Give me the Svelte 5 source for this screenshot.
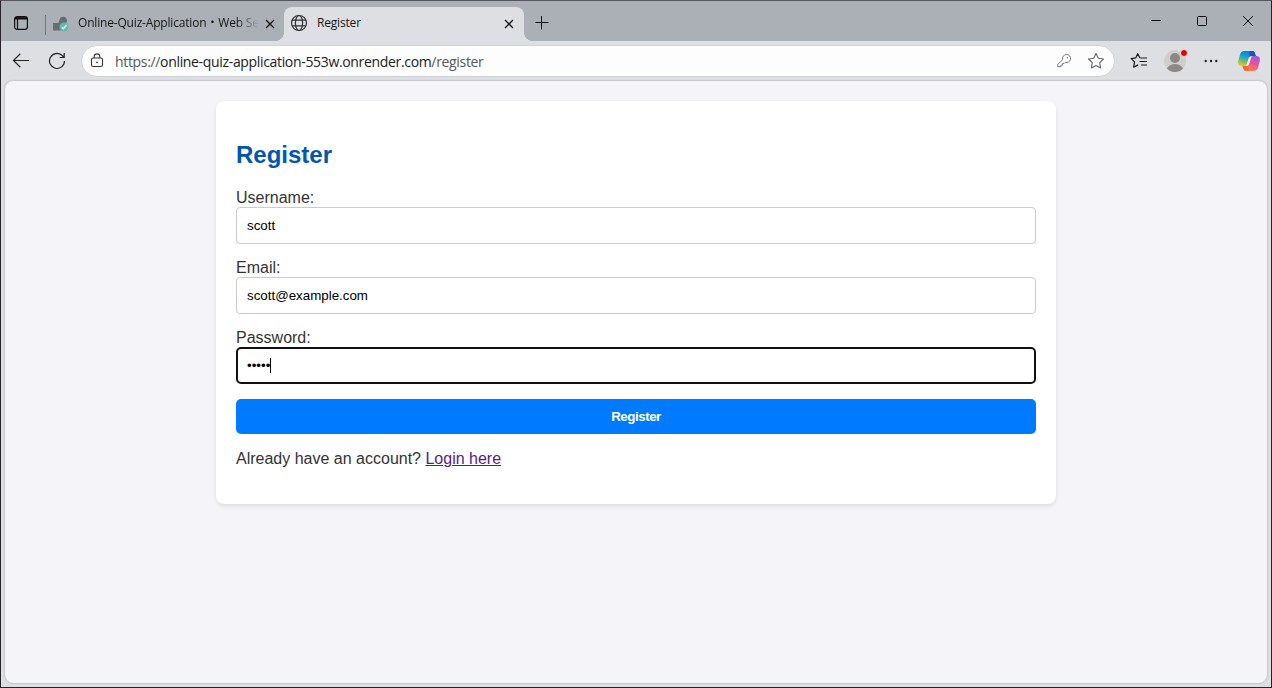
<script lang="ts">
  let username = $state('scott');
  let email = $state('scott@example.com');
</script>

<div class="window">
  <header class="tabs">
    <svg class="workspace" width="16" height="16" viewBox="0 0 16 16" fill="none" stroke="#111" stroke-width="1.2">
      <rect x="1.6" y="1.6" width="12.8" height="12.8" rx="2.4" />
      <path d="M2 3.300h12" stroke-width="2.4" />
      <path d="M4.500 4v10.400" />
    </svg>
    <span class="divider"></span>
    <div class="tab idle">
      <svg width="17" height="17" viewBox="0 0 17 17">
        <path d="M1 7h4.200c1 0 1.600-.5 1.900-1.500l.6-2.200C8.200 1.600 9.500.8 11.200.8c2.200 0 3.800 1.600 3.800 3.700 0 2.300-1.700 4-4 4L8.800 9.500V14.500H1z" fill="#696c70" />
        <circle cx="12" cy="11" r="4.500" fill="#61b9aa" />
        <path d="M9.800 11.200l1.600 1.600 3-3.600" stroke="#fff" stroke-width="1.300" fill="none" />
      </svg>
      <span class="title faded">Online-Quiz-Application・Web Se</span>
      <svg class="close" width="10" height="10" viewBox="0 0 10 10" stroke="#111" stroke-width="1.300"><path d="M1 1l8 8M9 1L1 9" /></svg>
    </div>
    <div class="tab active">
      <svg width="18" height="18" viewBox="0 0 18 18" fill="none" stroke="#303134" stroke-width="1.200">
        <circle cx="9" cy="9" r="7.500" />
        <ellipse cx="9" cy="9" rx="3.600" ry="7.500" />
        <path d="M2.200 6.200h13.600M2.200 11.800h13.600" />
      </svg>
      <span class="title">Register</span>
      <svg class="close" width="10" height="10" viewBox="0 0 10 10" stroke="#111" stroke-width="1.300"><path d="M1 1l8 8M9 1L1 9" /></svg>
    </div>
    <svg class="plus" width="14" height="14" viewBox="0 0 14 14" stroke="#111" stroke-width="1"><path d="M.5 6.500h13M6.500 0v13.500" /></svg>
    <div class="controls">
      <svg width="12" height="12" viewBox="0 0 12 12" stroke="#111"><path d="M1 5.500h10" /></svg>
      <svg width="12" height="12" viewBox="0 0 12 12" fill="none" stroke="#111"><rect x="1.500" y="1.500" width="9" height="9" rx="1" /></svg>
      <svg width="12" height="12" viewBox="0 0 12 12" stroke="#111"><path d="M1 1l10 10M11 1L1 11" /></svg>
    </div>
  </header>

  <nav class="toolbar">
    <svg class="back" width="18" height="16" viewBox="0 0 18 16" fill="none" stroke="#222" stroke-width="1.200"><path d="M17 7.500H1.500M8.300.8L1.500 7.500l6.800 6.700" /></svg>
    <svg class="reload" width="18" height="18" viewBox="0 0 18 18" fill="none" stroke="#222" stroke-width="1.200"><path d="M16.500 9A7.500 7.500 0 1 1 13.900 3.300L16 5.200M16.200 1v4.500h-4.600" /></svg>
    <div class="address">
      <svg width="14" height="16" viewBox="0 0 14 16" fill="none" stroke="#333" stroke-width="1.100">
        <rect x="1.500" y="5" width="11" height="8.500" rx="1.800" />
        <path d="M4.200 5V3.700a2.800 2.800 0 0 1 5.600 0V5" />
        <circle cx="7" cy="9.300" r=".9" fill="#333" stroke="none" />
      </svg>
      <span class="url"><i>https://</i>online-quiz-application-553w.onrender.com<i>/register</i></span>
      <svg class="key" width="16" height="16" viewBox="0 0 16 16" fill="none" stroke="#777" stroke-width="1">
        <path d="M10.500 1.500a4 4 0 1 1-1.200 7.800L8 10.600H6.400v1.600H4.900v1.500H1.700v-2.300L6.700 6.700A4 4 0 0 1 10.500 1.500z" />
        <circle cx="11.300" cy="4.700" r=".8" fill="#777" stroke="none" />
      </svg>
      <svg width="18" height="18" viewBox="0 0 18 18" fill="none" stroke="#666" stroke-width="1.100" stroke-linejoin="round"><path d="M9 1.500l2.300 4.800 5.200.7-3.800 3.700.9 5.200L9 13.400l-4.600 2.500.9-5.200L1.500 7l5.200-.7z" /></svg>
    </div>
    <svg class="favorites" width="18" height="18" viewBox="0 0 18 18" fill="none" stroke="#181818" stroke-width="1.200" stroke-linejoin="round"><path d="M10.700 5.800l-1-.2L7.700 1.700 5.700 5.900l-4.500.7 3.300 3.300-.8 5.200 4.500-2.200M11 6h6M9.500 9.500H17M11 13h6" /></svg>
    <div class="avatar">
      <svg width="22" height="22" viewBox="0 0 22 22">
        <defs><clipPath id="face"><circle cx="11" cy="11" r="11" /></clipPath></defs>
        <g clip-path="url(#face)"><rect width="22" height="22" fill="#d1cfcc" /><circle cx="11" cy="8" r="5" fill="#8b8885" /><ellipse cx="11" cy="20" rx="8.300" ry="6" fill="#8b8885" /></g>
      </svg>
      <b></b>
    </div>
    <svg class="more" width="14" height="4" viewBox="0 0 14 4" fill="#222"><circle cx="1.700" cy="2" r="1.200" /><circle cx="7" cy="2" r="1.200" /><circle cx="12.300" cy="2" r="1.200" /></svg>
    <svg class="assistant" width="22" height="20" viewBox="0 0 22 20">
      <defs>
        <linearGradient id="cool" x1=".6" y1="0" x2=".25" y2="1"><stop stop-color="#087edc" /><stop offset=".4" stop-color="#18a1d6" /><stop offset=".72" stop-color="#79bf59" /><stop offset="1" stop-color="#f4c71c" /></linearGradient>
        <linearGradient id="warm" x1=".8" y1="0" x2=".25" y2="1"><stop stop-color="#a052e8" /><stop offset=".5" stop-color="#ee568c" /><stop offset="1" stop-color="#ff8b42" /></linearGradient>
      </defs>
      <path d="M6 0h8.500c1.700 0 2.200 1.400 2.700 3l.6 2H14c-2 0-2.800 1.100-3.300 2.700L9 13c-.5 1.500-1.300 2-2.600 2H3.500C.7 15-.3 12.500.3 9.700L2 3.500C2.700 1.200 4 0 6 0z" fill="url(#cool)" />
      <path d="M16 20H8.500c-2 0-2.700-1.300-3.300-3l-.7-2H7c2 0 2.800-1 3.300-2.500L12 7.300C12.500 5.600 13.300 5 14.700 5h4c2.700 0 3.700 2.400 3 5.300L20 16.500c-.6 2.300-2 3.500-4 3.500z" fill="url(#warm)" />
      <path d="M11.500 0h3c1.700 0 2.200 1.400 2.700 3l.6 2H14c-1.400 0-2.100.5-2.600 1.300z" fill="#1555bd" />
      <path d="M4.500 15H7c1.400 0 2.200-.5 2.700-1.300L11 20H8.500c-2 0-2.700-1.300-3.300-3z" fill="#f16b34" />
      <path d="M10.300 8.500C10.900 6.200 11.900 5.200 13.800 5.200h.8c-1 .5-1.500 1.400-1.800 2.500l-1.400 4.500c-.7 2.100-1.700 2.800-3.700 2.800h-.5c1-.4 1.500-1.200 1.800-2.200z" fill="#eeeef2" />
    </svg>
  </nav>

  <main>
    <section class="card">
      <h2>Register</h2>
      <form onsubmit={(e) => e.preventDefault()}>
        <label for="username">Username:</label>
        <input id="username" type="text" bind:value={username} />
        <label for="email">Email:</label>
        <input id="email" type="text" bind:value={email} />
        <label for="password">Password:</label>
        <div class="field focused" id="password"><span>•••••</span><i class="caret"></i></div>
        <button type="submit">Register</button>
      </form>
      <p>Already have an account? <a href="#login">Login here</a></p>
    </section>
  </main>
</div>

<style>
  :global(body) { margin: 0; overflow: hidden; }
  * { box-sizing: border-box; }
  svg { display: block; flex: none; }
  .window { width: 1272px; height: 688px; border: 1px solid #25242a; border-top-color: #56565c; background: #dedfe3; display: flex; flex-direction: column; font-family: "Open Sans", "Noto Sans", "Noto Sans CJK JP", sans-serif; }
  .tabs { height: 40px; flex: none; background: #abafb6; display: flex; align-items: center; }
  .workspace { margin: 4px 0 0 12px; }
  .divider { width: 1px; height: 20px; margin: 7px 0 0 16px; background: #73767b; }
  .tab { height: 34px; margin-top: 6px; display: flex; align-items: center; font-size: 12px; color: #151515; white-space: nowrap; }
  .idle { width: 238px; padding: 0 8px 2px 6px; }
  .idle > svg:first-child { margin-top: 2px; }
  .active { position: relative; width: 240px; padding: 0 10px 2px 6px; background: #dedfe3; border-radius: 8px 8px 0 0; }
  .active::before, .active::after { content: ''; position: absolute; bottom: 0; width: 8px; height: 8px; }
  .active::before { right: 100%; background: radial-gradient(circle at 0 0, transparent 7.5px, #dedfe3 8px); }
  .active::after { left: 100%; background: radial-gradient(circle at 100% 0, transparent 7.5px, #dedfe3 8px); }
  .title { flex: 1; letter-spacing: -0.18px; line-height: 18px; }
  .idle .title { flex: none; width: 181px; margin-left: 9px; }
  .faded { mask-image: linear-gradient(90deg, #000 158px, transparent 181px); }
  .active .title { margin-left: 9px; }
  .close { margin-top: 1px; }
  .idle .close { margin-left: 6px; }
  .plus { margin: 4px 0 0 11px; }
  .controls { margin-left: auto; margin-right: 17px; display: flex; gap: 34px; }
  .toolbar { height: 40px; flex: none; display: flex; align-items: center; }
  .back { margin-left: 11px; }
  .reload { margin-left: 18px; }
  .address { width: 1034px; height: 32px; margin-left: 15px; padding: 0 9px 0 8px; display: flex; align-items: center; background: #fdfdfd; border: 1px solid #d1d2d5; border-radius: 16px; }
  .url { flex: 1; margin-left: 11px; font-size: 14px; letter-spacing: -0.333px; color: #202124; white-space: nowrap; }
  .url i { font-style: normal; color: #55585c; }
  .key { margin-right: 15px; }
  .favorites { margin-left: 15px; }
  .avatar { position: relative; margin-left: 16px; }
  .avatar b { position: absolute; left: 16px; top: -1px; box-sizing: content-box; width: 6px; height: 6px; border: 1px solid #dedfe3; border-radius: 50%; background: #e00008; }
  .more { margin-left: 18px; }
  .assistant { margin-left: 20px; }
  main { width: 1262px; height: 602px; margin-left: 4px; padding-top: 20px; border-radius: 8px; background: #f4f4f9; box-shadow: 0 0 2px rgba(0, 0, 0, .35); font-family: "Liberation Sans", Arial, sans-serif; }
  .card { width: 840px; height: 403px; margin: 0 auto; padding: 20px; border-radius: 8px; background: #fff; box-shadow: 0 2px 4px rgba(0, 0, 0, .1); color: #333; }
  h2 { margin: 20px 0; font-size: 24px; line-height: 28px; color: #0056b3; }
  form { display: flex; flex-direction: column; }
  label { font-size: 16px; line-height: 18px; }
  input, .field { width: 100%; height: 37px; margin: 0 0 15px; padding: 0 10px; border: 1px solid #ccc; border-radius: 4px; background: #fff; color: #000; font: 13.333px "Liberation Sans", Arial, sans-serif; outline: none; }
  .focused { display: flex; align-items: center; border: 2px solid #101010; border-radius: 5px; padding-left: 9px; }
  .caret { width: 1px; height: 15px; background: #000; }
  button { height: 35px; border: 0; border-radius: 5px; background: #007bff; color: #fff; font: bold 13.333px "Liberation Sans", Arial, sans-serif; letter-spacing: -0.45px; }
  p { margin: 16px 0; font-size: 16px; line-height: 18px; }
  a { color: #551a8b; }
</style>
